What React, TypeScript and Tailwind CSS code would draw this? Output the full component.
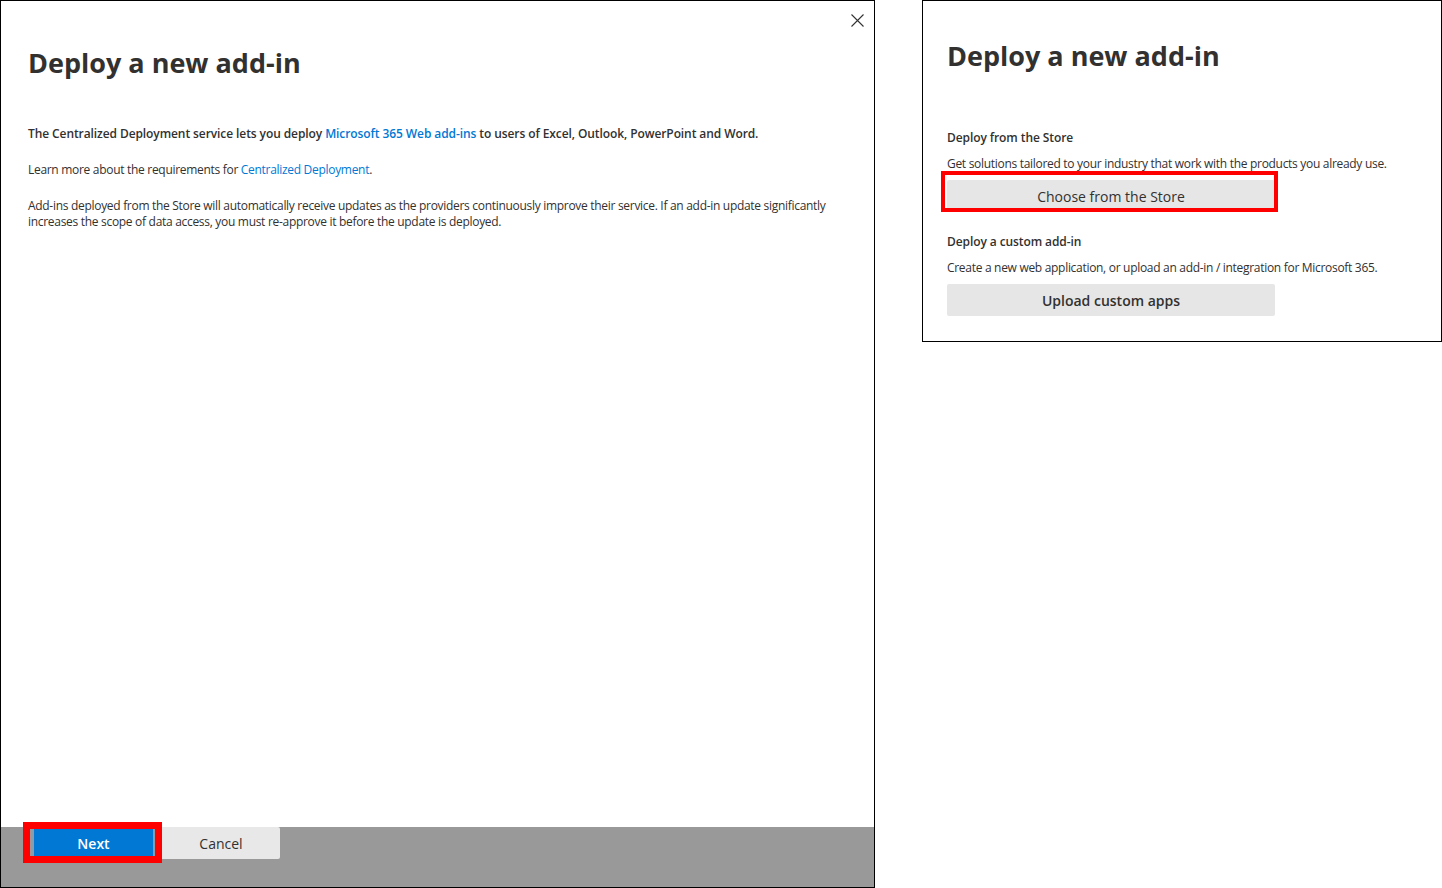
import React from "react";

const font = { fontFamily: '"Open Sans", "Noto Sans", Arial, sans-serif' };

function CloseIcon() {
  return (
    <svg width="13" height="13" viewBox="0 0 13 13" fill="none" stroke="#333333" strokeWidth="1.1">
      <path d="M0.5 0.5 L12.5 12.5 M12.5 0.5 L0.5 12.5" />
    </svg>
  );
}

export default function App() {
  return (
    <div className="flex w-[1442px] h-[888px] bg-white text-[#323130] overflow-hidden" style={font}>
      {/* Left panel */}
      <div className="relative flex flex-col w-[875px] h-[888px] border border-black shrink-0">
        <button className="absolute right-[10px] top-[13px] w-[13px] h-[13px] flex items-center justify-center">
          <CloseIcon />
        </button>
        <div className="pl-[27px] pr-[24px]">
          <h1 className="mt-[44px] text-[27px] leading-[36px] font-bold">Deploy a new add-in</h1>
          <p className="mt-[45px] text-[12px] leading-[16px] font-semibold tracking-[-0.09px]">
            The Centralized Deployment service lets you deploy{" "}
            <span className="text-[#0078d4]">Microsoft 365 Web add-ins</span> to users of Excel, Outlook, PowerPoint and Word.
          </p>
          <p className="mt-[20px] text-[12px] leading-[16px] tracking-[-0.3px]">
            Learn more about the requirements for <span className="text-[#0078d4]">Centralized Deployment</span>.
          </p>
          <p className="mt-[20px] text-[12px] leading-[16px] tracking-[-0.3px] max-w-[815px]">
            Add-ins deployed from the Store will automatically receive updates as the providers continuously improve their service. If an add-in update significantly increases the scope of data access, you must re-approve it before the update is deployed.
          </p>
        </div>
        <div className="mt-auto h-[60px] bg-[#999999] flex items-start pl-[31px] gap-[7px]">
          <div className="relative">
            <button className="w-[123px] h-[32px] bg-[#0078d4] text-white text-[14px] font-semibold border-x-2 border-[#8a9bab]">Next</button>
            <div className="absolute left-[-9px] top-[-5px] w-[139px] h-[41px] border-[7px] border-[#ff0000] pointer-events-none" />
          </div>
          <button className="w-[118px] h-[32px] bg-[#e8e8e8] text-[#323130] text-[14px] rounded-br-[2px] rounded-tr-[2px]">Cancel</button>
        </div>
      </div>

      <div className="w-[47px] shrink-0" />

      {/* Right panel */}
      <div className="w-[520px] h-[342px] border border-black shrink-0 pl-[24px] pr-[20px]">
        <h1 className="mt-[37px] text-[27px] leading-[36px] font-bold">Deploy a new add-in</h1>
        <h2 className="mt-[56px] text-[12px] leading-[16px] font-semibold tracking-[-0.09px]">Deploy from the Store</h2>
        <p className="mt-[10px] text-[12px] leading-[16px] tracking-[-0.3px]">Get solutions tailored to your industry that work with the products you already use.</p>
        <div className="relative mt-[8px] w-[328px]">
          <button className="w-[328px] h-[32px] bg-[#e6e6e6] text-[14px] text-[#323130] rounded-[2px]">Choose from the Store</button>
          <div className="absolute left-[-6px] top-[-9px] w-[337px] h-[41px] border-[4px] border-[#ff0000] pointer-events-none" />
        </div>
        <h2 className="mt-[22px] text-[12px] leading-[16px] font-semibold tracking-[-0.09px]">Deploy a custom add-in</h2>
        <p className="mt-[10px] text-[12px] leading-[16px] tracking-[-0.3px]">Create a new web application, or upload an add-in / integration for Microsoft 365.</p>
        <button className="mt-[8px] w-[328px] h-[32px] bg-[#e6e6e6] text-[14px] text-[#323130] rounded-[2px] font-semibold">Upload custom apps</button>
      </div>
    </div>
  );
}
